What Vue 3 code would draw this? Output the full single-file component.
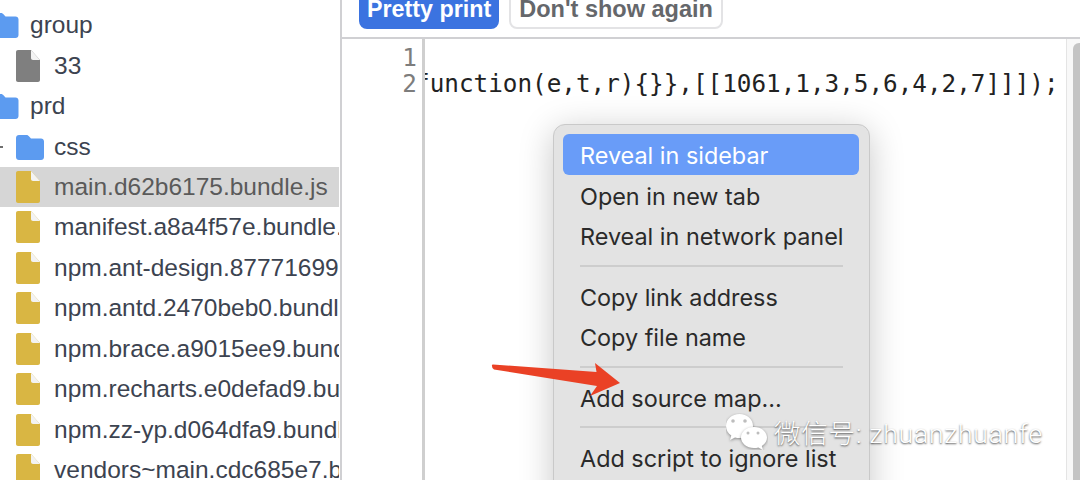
<script setup>
const rows = [
  { name: 'group', kind: 'folder', indent: 0 },
  { name: '33', kind: 'file', indent: 1 },
  { name: 'prd', kind: 'folder', indent: 0 },
  { name: 'css', kind: 'folder', indent: 1, arrow: true },
  { name: 'main.d62b6175.bundle.js', kind: 'js', indent: 1, selected: true },
  { name: 'manifest.a8a4f57e.bundle.js', kind: 'js', indent: 1 },
  { name: 'npm.ant-design.87771699.bundle.js', kind: 'js', indent: 1 },
  { name: 'npm.antd.2470beb0.bundle.js', kind: 'js', indent: 1 },
  { name: 'npm.brace.a9015ee9.bundle.js', kind: 'js', indent: 1 },
  { name: 'npm.recharts.e0defad9.bundle.js', kind: 'js', indent: 1 },
  { name: 'npm.zz-yp.d064dfa9.bundle.js', kind: 'js', indent: 1 },
  { name: 'vendors~main.cdc685e7.bundle.js', kind: 'js', indent: 1 },
]
const menu = [
  [{ t: 'Reveal in sidebar', on: true }, { t: 'Open in new tab' }, { t: 'Reveal in network panel' }],
  [{ t: 'Copy link address' }, { t: 'Copy file name' }],
  [{ t: 'Add source map...' }],
  [{ t: 'Add script to ignore list' }],
]
</script>

<template>
  <div class="page">
    <aside class="sidebar">
      <div
        v-for="r in rows"
        :key="r.name"
        class="row"
        :class="{ selected: r.selected, nested: r.indent }"
      >
        <span v-if="r.arrow" class="tick"></span>
        <svg v-if="r.kind === 'folder'" class="ic" viewBox="0 0 28 26">
          <path d="M3 1h7.500c1 0 1.600.4 2.200 1.100L15 4.500h10c1.700 0 3 1.300 3 3V23c0 1.700-1.300 3-3 3H3c-1.700 0-3-1.300-3-3V4c0-1.700 1.300-3 3-3z" fill="#5c9bf0" />
        </svg>
        <svg v-else class="ic doc" viewBox="0 0 24 32">
          <path
            d="M2 0h13l9 10v20c0 1.100-.9 2-2 2H2c-1.100 0-2-.9-2-2V2C0 .9.900 0 2 0z"
            :fill="r.kind === 'js' ? '#d9b643' : '#7f7f7f'"
          />
          <path d="M15 0v8c0 1.100.9 2 2 2h7z" fill="#f3f3f3" />
        </svg>
        <span class="name">{{ r.name }}</span>
      </div>
    </aside>

    <main class="main">
      <div class="infobar">
        <button class="btn primary">Pretty print</button>
        <button class="btn">Don't show again</button>
      </div>
      <div class="editor">
        <div class="gutter"><div>1</div><div>2</div></div>
        <pre class="code"><code>&#10;function(e,t,r){}},[[1061,1,3,5,6,4,2,7]]]);</code></pre>
        <div class="scrollbar"><div class="thumb"></div></div>
      </div>
    </main>

    <div class="menu">
      <template v-for="(group, i) in menu" :key="i">
        <hr v-if="i" class="sep" />
        <div v-for="m in group" :key="m.t" class="item" :class="{ on: m.on }">{{ m.t }}</div>
      </template>
    </div>

    <svg class="arrow" viewBox="0 0 140 50" width="140" height="50">
      <path d="M2 4Q1.500 2.500 3 2.500L106.500 10 105 1 130 21 100 34 107 24 4 7.500Q2 7 2 4Z" fill="#ea4125" />
    </svg>

    <div class="mark">
      <svg class="wx" viewBox="0 0 42 37" width="42" height="37">
        <g class="bubble">
          <path d="M13.500 1C6 1 0 6.300 0 13c0 3.900 2.100 7.300 5.300 9.500L4 27l5-2.500c1.400.4 2.900.6 4.500.6 7.500 0 13.500-5.400 13.500-12.100S21 1 13.500 1z" fill="#fff" />
        </g>
        <g class="bubble">
          <path d="M28 14c-7.200 0-13 4.800-13 10.500S20.800 35 28 35c1.500 0 3-.2 4.300-.6L37 37l-1.200-4c3.300-2 5.200-5 5.200-8.500C41 18.800 35.200 14 28 14z" fill="#fff" />
        </g>
        <circle cx="7" cy="8" r="1.800" fill="#bdbdbd" />
        <circle cx="19" cy="8" r="1.800" fill="#bdbdbd" />
        <circle cx="22" cy="20" r="1.500" fill="#bdbdbd" />
        <circle cx="32" cy="20" r="1.500" fill="#bdbdbd" />
      </svg>
      <span class="mark-text">微信号: zhuanzhuanfe</span>
    </div>
  </div>
</template>

<style>
html, body { margin: 0; background: #fff; }
</style>

<style scoped>
.page {
  position: relative;
  display: flex;
  width: 1080px;
  height: 480px;
  overflow: hidden;
  background: #fff;
  font-family: "Liberation Sans", Arial, sans-serif;
}
.sidebar {
  flex: none;
  box-sizing: border-box;
  width: 342px;
  height: 480px;
  padding: 5px 1px 0 0;
  border-right: 2px solid #d0d0d3;
  overflow: hidden;
}
.row {
  position: relative;
  display: flex;
  align-items: center;
  height: 40.45px;
  padding-left: 30px;
  font-size: 24.5px;
  color: #3c4350;
  white-space: nowrap;
  overflow: hidden;
}
.row.nested { padding-left: 54px; }
.row.selected { background: #d6d6d6; color: #5a5a5a; }
.ic {
  position: absolute;
  left: -10px;
  width: 29px;
  height: 26px;
}
.row.nested .ic { left: 16px; width: 28px; }
.ic.doc, .row.nested .ic.doc {
  left: 16px;
  width: 24px;
  height: 32px;
}
.tick {
  position: absolute;
  left: 0;
  width: 3px;
  height: 2px;
  background: #6e6e6e;
}
.main {
  flex: 1;
  min-width: 0;
  display: flex;
  flex-direction: column;
}
.infobar {
  flex: none;
  box-sizing: border-box;
  height: 39px;
  display: flex;
  align-items: flex-end;
  gap: 10px;
  padding: 0 0 8px 17px;
  border-bottom: 2px solid #d0d0d3;
}
.btn {
  box-sizing: border-box;
  height: 40px;
  padding: 0 8px;
  font: 700 23.5px "Liberation Sans", Arial, sans-serif;
  line-height: 36px;
  background: #fff;
  color: #65676b;
  border: 2px solid #e3e3e5;
  border-radius: 8px;
  white-space: nowrap;
}
.btn.primary {
  padding: 0 6px;
  font-size: 23.3px;
  background: #3b73e0;
  border-color: #3b73e0;
  color: #fff;
}
.editor {
  flex: 1;
  display: flex;
  min-height: 0;
}
.gutter {
  flex: none;
  box-sizing: border-box;
  width: 83px;
  padding: 6px 5px 0 0;
  border-right: 3px solid #cfcfcf;
  text-align: right;
  font: 24.3px/26px "DejaVu Sans Mono", monospace;
  color: #7d7d7d;
}
.code {
  flex: 1;
  min-width: 0;
  margin: 0;
  padding-top: 6px;
  overflow: hidden;
  font: 24.3px/26px "DejaVu Sans Mono", monospace;
  color: #222;
}
.code code {
  display: block;
  font: inherit;
  margin-left: -10px;
  white-space: pre;
}
.scrollbar {
  flex: none;
  box-sizing: border-box;
  width: 14px;
  padding: 4px 0 0 6px;
  background: #f8f8f8;
  border-left: 1px solid #e4e4e4;
}
.thumb {
  height: 100%;
  background: #c4c4c4;
  border-radius: 6px 0 0 0;
}
.menu {
  position: absolute;
  left: 553px;
  top: 124px;
  box-sizing: border-box;
  width: 317px;
  height: 400px;
  padding: 9px 10px 9px 9px;
  background: #e3e3e3;
  border: 1px solid #c9c9c9;
  border-radius: 12px;
  box-shadow: 0 6px 34px rgba(0, 0, 0, 0.22);
  font-family: Inter, "Liberation Sans", sans-serif;
  font-size: 23.4px;
  color: #2a2a2a;
}
.item {
  box-sizing: border-box;
  height: 40.5px;
  line-height: 44px;
  padding-left: 17px;
  border-radius: 6px;
  white-space: nowrap;
}
.item.on {
  background: #699cf8;
  color: #fff;
}
.sep {
  height: 2px;
  margin: 9px 16px 9px 17px;
  border: 0;
  background: #cdcdcd;
}
.arrow {
  position: absolute;
  left: 490px;
  top: 362px;
}
.mark {
  position: absolute;
  left: 726px;
  top: 413px;
  display: flex;
  align-items: center;
  gap: 6px;
  height: 37px;
}
.bubble {
  filter: drop-shadow(0 1px 1.500px rgba(0, 0, 0, 0.4));
}
.mark-text {
  font: 300 26.5px "Roboto", "Noto Sans CJK SC", sans-serif;
  letter-spacing: 0.8px;
  color: #fff;
  text-shadow: 0 1px 2px rgba(0, 0, 0, 0.7);
  white-space: nowrap;
}
</style>
